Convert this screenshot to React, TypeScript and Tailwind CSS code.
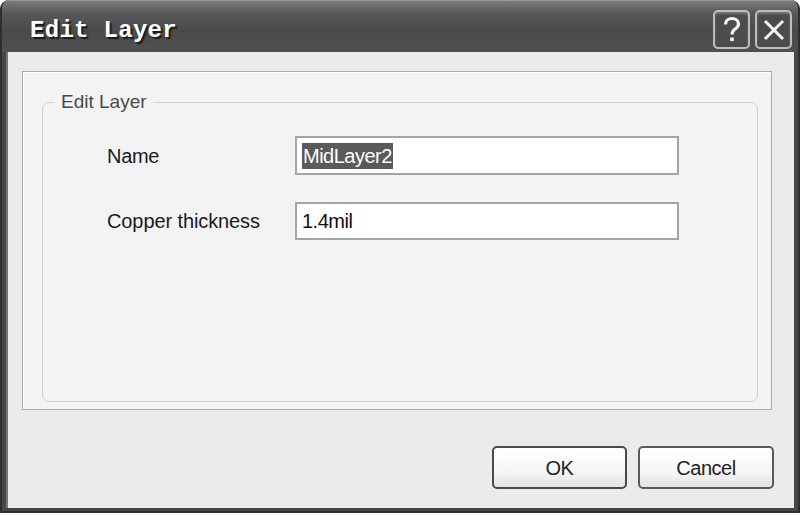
import React from "react";

function CapButton({ children }: { children: React.ReactNode }) {
  return (
    <div className="w-[37px] h-[39px] rounded-[5px] border-2 border-[#bdbdbd] bg-[#4c4c4c] flex items-center justify-center shadow-[inset_0_2px_2px_rgba(255,255,255,0.25)]">
      {children}
    </div>
  );
}

export default function App() {
  return (
    <div className="w-[803px] h-[516px] bg-white relative" style={{ fontFamily: '"Liberation Sans", Arial, sans-serif' }}>
      <div className="w-[800px] h-[513px] flex flex-col rounded-t-[9px] bg-[#474747] border-l-2 border-r-2 border-b-2 border-[#2e2e2e] overflow-hidden">
        {/* Title bar */}
        <div className="h-[52px] shrink-0 flex items-center justify-between pl-[28px] pr-[6px] bg-[linear-gradient(to_bottom,#7a7a7a_0%,#575757_25%,#4a4a4a_60%,#505050_100%)] border-t border-[#9a9a9a] rounded-t-[8px]">
          <span
            className="text-white font-bold text-[24px] tracking-[0.3px] leading-none mt-[8px]"
            style={{ fontFamily: '"Liberation Mono", "Courier New", monospace', textShadow: "2px 2px 1px #1a1a1a" }}
          >
            Edit Layer
          </span>
          <div className="flex gap-[5px] mt-[6px]">
            <CapButton>
              <svg width="20" height="28" viewBox="0 0 20 28">
                <path d="M3.5 8.5 C3.5 4.5 6.5 2.5 10 2.5 C13.5 2.5 16.5 4.5 16.5 8 C16.5 11 14.5 12 12.5 13.5 C10.8 14.8 10 15.8 10 18.5" fill="none" stroke="#f2f2f2" strokeWidth="3.2" />
                <rect x="8.2" y="21.5" width="3.6" height="3.6" fill="#f2f2f2" />
              </svg>
            </CapButton>
            <CapButton>
              <svg width="24" height="24" viewBox="0 0 24 24">
                <path d="M4 4 L20 20 M20 4 L4 20" stroke="#f2f2f2" strokeWidth="3" strokeLinecap="square" />
              </svg>
            </CapButton>
          </div>
        </div>
        {/* Client area */}
        <div className="flex-1 flex flex-col bg-[#ebebeb] mx-[4px] mb-[3px] border-l-2 border-[#777]">
          <div className="ml-[14px] mr-[22px] mt-[19px] h-[339px] bg-[#f3f3f3] border border-[#a9a9a9] shadow-[inset_1px_1px_0_#ffffff] pl-[19px] pr-[13px] pt-[20px] pb-[7px] flex">
            <fieldset className="flex-1 border border-[#cfcfcf] rounded-[7px] px-0 m-0 min-w-0">
              <legend className="ml-[12px] px-[6px] text-[19px] text-[#4a4a4a] leading-[20px]">Edit Layer</legend>
              <div className="pl-[64px] pt-[24px] flex flex-col gap-[27px]">
                <div className="flex items-center">
                  <span className="w-[188px] text-[20px] text-[#1a1a1a] tracking-[-0.3px]">Name</span>
                  <div className="w-[384px] h-[39px] bg-white border-2 border-[#a4a4a4] flex items-center pl-[5px]">
                    <span className="bg-[#5a5a5a] text-white text-[20px] leading-[26px] tracking-[-0.5px] px-[1px]">MidLayer2</span>
                  </div>
                </div>
                <div className="flex items-center">
                  <span className="w-[188px] text-[20px] text-[#1a1a1a] tracking-[-0.1px]">Copper thickness</span>
                  <div className="w-[384px] h-[38px] bg-white border-2 border-[#a4a4a4] flex items-center pl-[5px]">
                    <span className="text-[#111] text-[20px] leading-[26px] tracking-[-0.5px]">1.4mil</span>
                  </div>
                </div>
              </div>
            </fieldset>
          </div>
          <div className="flex justify-end gap-[11px] mr-[20px] mt-[36px]">
            <button className="w-[135px] h-[43px] rounded-[5px] border-2 border-[#4a4a4a] bg-[linear-gradient(to_bottom,#ffffff,#f6f6f6_60%,#e2e2e2)] text-[20px] text-[#222] tracking-[-0.5px]">
              OK
            </button>
            <button className="w-[136px] h-[43px] rounded-[5px] border-2 border-[#5a5a5a] bg-[linear-gradient(to_bottom,#ffffff,#f6f6f6_60%,#e2e2e2)] text-[20px] text-[#222] tracking-[-0.5px]">
              Cancel
            </button>
          </div>
        </div>
      </div>
    </div>
  );
}
